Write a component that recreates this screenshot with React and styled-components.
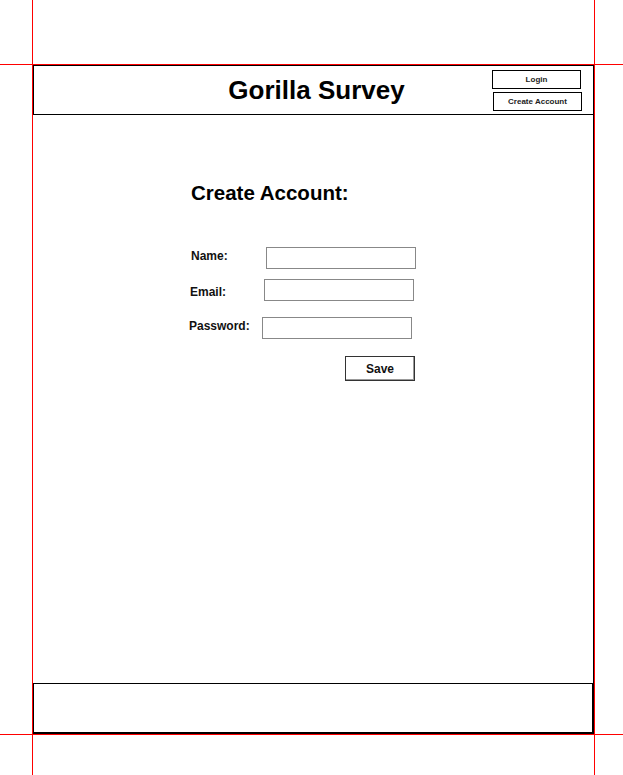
import React from 'react';
import styled, { createGlobalStyle } from 'styled-components';

const GlobalStyle = createGlobalStyle`
  html, body {
    margin: 0;
    padding: 0;
    background: #fff;
  }
  body {
    font-family: 'Liberation Sans', Arial, sans-serif;
    color: #111;
  }
`;

const Page = styled.div`
  position: relative;
  width: 623px;
  height: 775px;
  box-sizing: border-box;
  padding: 65px 0 0 33px;
  overflow: hidden;
`;

const Guide = styled.div`
  position: absolute;
  background: #f00;
  ${(props) => props.vertical
    ? `left: ${props.at}px; top: 0; width: 1px; height: 100%;`
    : `top: ${props.at}px; left: 0; height: 1px; width: 100%;`}
`;

const Frame = styled.div`
  width: 561px;
  height: 669px;
  display: flex;
  flex-direction: column;
`;

const Header = styled.header`
  height: 50px;
  box-sizing: border-box;
  border: 1px solid #000;
  display: grid;
  grid-template-columns: 1fr auto 1fr;
`;

const Title = styled.h1`
  grid-column: 2;
  align-self: center;
  margin: 0;
  padding-left: 6px;
  font-size: 26px;
  font-weight: bold;
  line-height: 30px;
  color: #000;
`;

const HeaderActions = styled.div`
  grid-column: 3;
  justify-self: end;
  display: flex;
  flex-direction: column;
  align-items: flex-end;
  gap: 3px;
  padding: 4px 11px 0 0;
`;

const SmallButton = styled.button`
  width: 89px;
  height: 19px;
  margin-right: ${(props) => props.nudge || 0}px;
  padding: 0;
  box-sizing: border-box;
  border: 1px solid #000;
  background: #fff;
  font-family: 'Liberation Sans', Arial, sans-serif;
  font-size: 8px;
  font-weight: bold;
  color: #222;
  cursor: pointer;
`;

const Main = styled.main`
  flex: 1;
  border-right: 1px solid #000;
  padding-left: 156px;
`;

const Form = styled.form`
  width: 225px;
  display: flex;
  flex-direction: column;
`;

const Heading = styled.h2`
  margin: 66px 0 0 2px;
  font-size: 20.5px;
  line-height: 23px;
  font-weight: bold;
  color: #000;
  white-space: nowrap;
`;

const Row = styled.div`
  display: flex;
  align-items: center;
  margin-top: ${(props) => props.top}px;
  padding-left: ${(props) => props.indent}px;
`;

const Label = styled.label`
  width: ${(props) => props.width}px;
  flex-shrink: 0;
  margin-bottom: ${(props) => props.lift || 0}px;
  font-size: 12px;
  font-weight: bold;
  color: #111;
`;

const Input = styled.input`
  width: 150px;
  height: 22px;
  flex-shrink: 0;
  box-sizing: border-box;
  margin: 0;
  border: 1px solid #888;
  background: #fff;
  outline: none;
`;

const SaveButton = styled.button`
  align-self: flex-end;
  margin-top: 17px;
  margin-right: -1px;
  width: 70px;
  height: 25px;
  box-sizing: border-box;
  padding: 0;
  border: 1px solid #333;
  box-shadow: inset -1px -1px 0 #999;
  background: #fff;
  font-family: 'Liberation Sans', Arial, sans-serif;
  font-size: 12px;
  font-weight: bold;
  color: #111;
`;

const Footer = styled.footer`
  height: 51px;
  box-sizing: border-box;
  border: 1px solid #000;
  border-bottom-width: 2px;
  border-right-width: 2px;
`;

const fields = [
  { name: 'Name:', width: 75, indent: 2, top: 43, lift: 5 },
  { name: 'Email:', width: 74, indent: 1, top: 10, lift: -4 },
  { name: 'Password:', width: 73, indent: 0, top: 16, lift: 4, type: 'password' },
];

function App() {
  return (
    <>
      <GlobalStyle />
      <Page>
        <Frame>
          <Header>
            <Title>Gorilla Survey</Title>
            <HeaderActions>
              <SmallButton nudge={1}>Login</SmallButton>
              <SmallButton>Create Account</SmallButton>
            </HeaderActions>
          </Header>
          <Main>
            <Form onSubmit={(e) => e.preventDefault()}>
              <Heading>Create Account:</Heading>
              {fields.map((f) => (
                <Row key={f.name} top={f.top} indent={f.indent}>
                  <Label width={f.width} lift={f.lift}>{f.name}</Label>
                  <Input type={f.type || 'text'} />
                </Row>
              ))}
              <SaveButton type="submit">Save</SaveButton>
            </Form>
          </Main>
          <Footer />
        </Frame>
        <Guide vertical at={32} />
        <Guide vertical at={594} />
        <Guide at={64} />
        <Guide at={734} />
      </Page>
    </>
  );
}

export default App;
